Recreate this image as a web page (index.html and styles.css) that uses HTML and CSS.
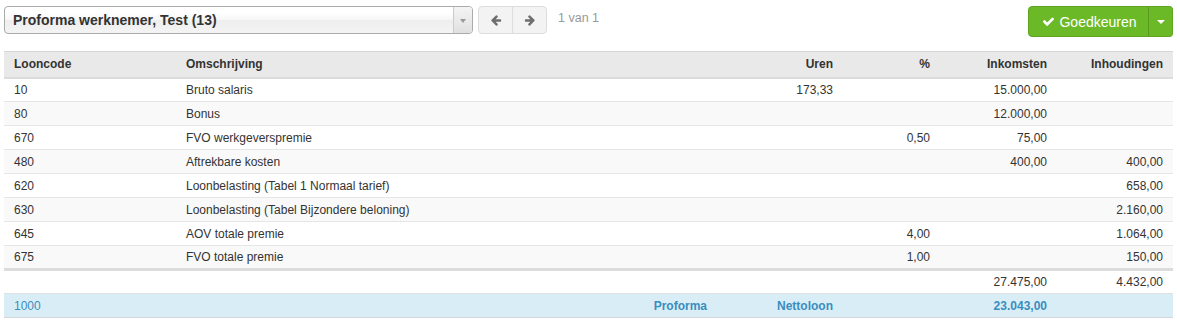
FILE: index.html
```html
<!DOCTYPE html>
<html lang="nl">
<head>
<meta charset="utf-8">
<title>Proforma</title>
<link rel="stylesheet" href="styles.css">
</head>
<body>
<div class="toolbar">
  <div class="select">
    <span class="select-text">Proforma werknemer, Test (13)</span>
    <span class="select-arrow"><span class="tri"></span></span>
  </div>
  <div class="nav">
    <button class="nav-btn" type="button">
      <svg viewBox="0 0 1792 1792" width="12" height="12"><path d="M1664 896v128q0 53-32.5 90.5t-84.5 37.5h-704l293 294q38 36 38 90t-38 90l-75 76q-37 37-90 37-52 0-91-37l-651-652q-37-37-37-90 0-52 37-91l651-650q38-38 91-38 52 0 90 38l75 74q38 38 38 91t-38 91l-293 293h704q52 0 84.5 37.5t32.5 90.5z" fill="currentColor"/></svg>
    </button>
    <button class="nav-btn" type="button">
      <svg viewBox="0 0 1792 1792" width="12" height="12"><path d="M1600 960q0 54-37 91l-651 651q-39 37-91 37-51 0-90-37l-75-75q-38-38-38-91t38-91l293-293h-704q-52 0-84.5-37.5t-32.5-90.5v-128q0-53 32.5-90.5t84.5-37.5h704l-293-294q-38-36-38-90t38-90l75-75q38-38 90-38 53 0 91 38l651 651q37 35 37 90z" fill="currentColor"/></svg>
    </button>
  </div>
  <span class="count">1 van 1</span>
  <div class="approve">
    <button class="approve-main" type="button">
      <svg viewBox="0 0 1792 1792" width="13" height="13"><path d="M1671 566q0 40-28 68l-724 724-136 136q-28 28-68 28t-68-28l-136-136-362-362q-28-28-28-68t28-68l136-136q28-28 68-28t68 28l294 295 656-657q28-28 68-28t68 28l136 136q28 28 28 68z" fill="currentColor"/></svg>
      <span>Goedkeuren</span>
    </button>
    <button class="approve-caret" type="button"><span class="caret"></span></button>
  </div>
</div>

<table class="grid">
  <colgroup>
    <col class="c1"><col class="c2"><col class="c3"><col class="c4"><col class="c5"><col class="c6">
  </colgroup>
  <thead>
    <tr>
      <th>Looncode</th><th>Omschrijving</th><th class="r">Uren</th><th class="r">%</th><th class="r">Inkomsten</th><th class="r">Inhoudingen</th>
    </tr>
  </thead>
  <tbody>
    <tr><td>10</td><td>Bruto salaris</td><td class="r">173,33</td><td></td><td class="r">15.000,00</td><td></td></tr>
    <tr><td>80</td><td>Bonus</td><td></td><td></td><td class="r">12.000,00</td><td></td></tr>
    <tr><td>670</td><td>FVO werkgeverspremie</td><td></td><td class="r">0,50</td><td class="r">75,00</td><td></td></tr>
    <tr><td>480</td><td>Aftrekbare kosten</td><td></td><td></td><td class="r">400,00</td><td class="r">400,00</td></tr>
    <tr><td>620</td><td>Loonbelasting (Tabel 1 Normaal tarief)</td><td></td><td></td><td></td><td class="r">658,00</td></tr>
    <tr><td>630</td><td>Loonbelasting (Tabel Bijzondere beloning)</td><td></td><td></td><td></td><td class="r">2.160,00</td></tr>
    <tr><td>645</td><td>AOV totale premie</td><td></td><td class="r">4,00</td><td></td><td class="r">1.064,00</td></tr>
    <tr><td>675</td><td>FVO totale premie</td><td></td><td class="r">1,00</td><td></td><td class="r">150,00</td></tr>
  </tbody>
  <tfoot>
    <tr class="totals"><td></td><td></td><td></td><td></td><td class="r">27.475,00</td><td class="r">4.432,00</td></tr>
    <tr class="net"><td>1000</td><td class="r b">Proforma</td><td class="r b">Nettoloon</td><td></td><td class="r b">23.043,00</td><td></td></tr>
  </tfoot>
</table>
</body>
</html>
```

FILE: styles.css
```css
* { box-sizing: border-box; }

body {
  margin: 0;
  padding: 6px 4px 0 4px;
  font-family: "Liberation Sans", Arial, sans-serif;
  font-size: 12px;
  color: #333;
  background: #fff;
}

.toolbar {
  display: flex;
  align-items: flex-start;
  height: 31px;
}

.select {
  display: flex;
  align-items: stretch;
  width: 469px;
  height: 28px;
  border: 1px solid #aaa;
  border-radius: 4px;
  background: linear-gradient(#fff 20%, #f6f6f6 50%, #eee 52%, #f4f4f4 100%);
  overflow: hidden;
}

.select-text {
  flex: 1;
  padding-left: 8px;
  line-height: 26px;
  font-size: 14px;
  font-weight: bold;
  color: #333;
}

.select-arrow {
  width: 19px;
  border-left: 1px solid #ccc;
  background: linear-gradient(#f4f4f4, #e0e0e0);
  display: flex;
  align-items: center;
  justify-content: center;
}

.tri {
  width: 0;
  height: 0;
  border-left: 3px solid transparent;
  border-right: 3px solid transparent;
  border-top: 4px solid #999;
  margin-top: 2px;
}

.nav {
  display: flex;
  margin-left: 5px;
  height: 28px;
}

.nav-btn {
  width: 35px;
  height: 28px;
  padding: 0;
  border: 1px solid #ddd;
  background: #f3f3f3;
  color: #6e6e6e;
  display: flex;
  align-items: center;
  justify-content: center;
}

.nav-btn:first-child {
  border-radius: 4px 0 0 4px;
}

.nav-btn + .nav-btn {
  border-left: 1px solid #ddd;
  margin-left: -1px;
  border-radius: 0 4px 4px 0;
}

.count {
  margin-left: 11px;
  line-height: 24px;
  font-size: 12.5px;
  color: #999;
}

.approve {
  margin-left: auto;
  display: flex;
  height: 31px;
}

.approve-main,
.approve-caret {
  height: 31px;
  border: 1px solid #5fa521;
  background: #6cb928;
  color: #fff;
  font-family: "Liberation Sans", Arial, sans-serif;
  font-size: 14px;
  display: flex;
  align-items: center;
  justify-content: center;
}

.approve-main {
  width: 121px;
  border-radius: 4px 0 0 4px;
  gap: 4px;
  padding: 0 0 0 2px;
}

.approve-caret {
  width: 25px;
  margin-left: -1px;
  border-left-color: #5a9a20;
  border-radius: 0 4px 4px 0;
  padding: 0;
}

.caret {
  width: 0;
  height: 0;
  border-left: 4px solid transparent;
  border-right: 4px solid transparent;
  border-top: 4px solid #fff;
}

.grid {
  width: 1169px;
  margin-top: 14px;
  border-collapse: collapse;
  table-layout: fixed;
}

.c1 { width: 172px; }
.c2 { width: 541px; }
.c3 { width: 126px; }
.c4 { width: 97px; }
.c5 { width: 117px; }
.c6 { width: 116px; }

.grid th,
.grid td {
  padding: 0 10px;
  height: 24px;
  line-height: 14px;
  text-align: left;
  vertical-align: middle;
  white-space: nowrap;
}

.grid th {
  height: 26px;
  font-weight: bold;
  background: #e9e9e9;
  border-top: 1px solid #d6d6d6;
  border-bottom: 2px solid #dcdcdc;
}

.grid td {
  border-top: 1px solid #e6e6e6;
}

.grid tbody tr:nth-child(even) td {
  background: #f9f9f9;
}

.grid .r { text-align: right; }
.grid .b { font-weight: bold; }

.grid tr.totals td {
  border-top: 3px solid #dcdcdc;
  background: #fff;
}

.grid tr.net td {
  background: #d9edf7;
  color: #3a8dbf;
  border-top: 1px solid #e0e0e0;
  border-bottom: 1px solid #d6d6d6;
}
```
